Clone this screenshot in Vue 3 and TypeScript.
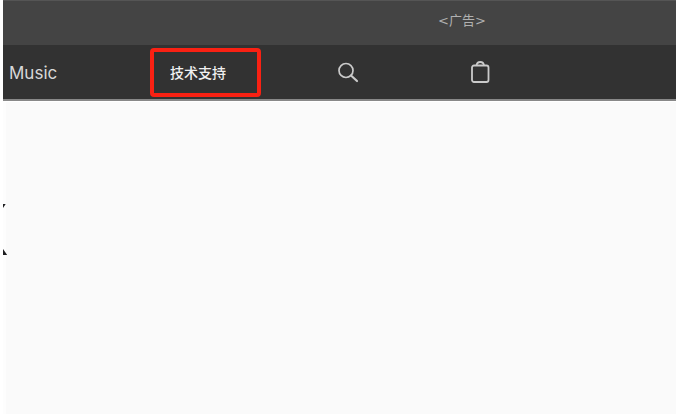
<script setup lang="ts">
const adLabel: string = '<广告>'
const supportLabel: string = '技术支持'
</script>

<template>
  <div class="page">
    <aside class="ad-bar">
      <span class="ad-label">{{ adLabel }}</span>
    </aside>
    <nav class="nav">
      <a class="link music" href="#music">Music</a>
      <a class="link support" href="#support">{{ supportLabel }}</a>
      <button class="icon-button" type="button" aria-label="Search">
        <svg width="24" height="24" viewBox="0 0 24 24" fill="none" stroke="#cacaca" stroke-width="1.7">
          <circle cx="10" cy="10.5" r="7" />
          <path d="M15 15.500L21 21" stroke-width="2.200" stroke-linecap="round" />
        </svg>
      </button>
      <button class="icon-button" type="button" aria-label="Shopping bag">
        <svg width="24" height="24" viewBox="0 0 24 24" fill="none" stroke="#cacaca" stroke-width="1.8">
          <rect x="4" y="5.500" width="16.500" height="16.500" rx="2" />
          <path d="M8.500 5.500C8.800 3 10.200 2 12.250 2S15.700 3 16 5.500" />
        </svg>
      </button>
    </nav>
    <main class="content">
      <h1 class="heading"><span>X</span></h1>
    </main>
  </div>
</template>

<style>
body {
  background: #ffffff;
}
</style>

<style scoped>
.page {
  display: flex;
  flex-direction: column;
  box-sizing: border-box;
  min-height: 100vh;
  padding: 0 0 1px 3px;
  font-family: Inter, "Noto Sans CJK SC", sans-serif;
}

.ad-bar {
  display: grid;
  grid-template-columns: 432fr 54fr 187fr;
  box-sizing: border-box;
  height: 45px;
  padding-top: 11px;
  border-top: 1px solid #555555;
  background: #444444;
}

.ad-label {
  grid-column: 2;
  justify-self: center;
  color: #b0b0b0;
  font-family: "DejaVu Sans", "Noto Sans CJK SC", sans-serif;
  font-size: 13px;
  line-height: 18px;
  white-space: nowrap;
}

.nav {
  display: grid;
  grid-template-columns: 147fr 111fr 174fr 90fr 151fr;
  align-items: center;
  box-sizing: border-box;
  height: 56px;
  border-bottom: 2px solid #888888;
  background: #323232;
}

.link {
  color: #d8d8d8;
  font-size: 17px;
  line-height: 20px;
  text-decoration: none;
  white-space: nowrap;
}

.music {
  padding: 2px 0 0 6px;
}

.support {
  box-sizing: border-box;
  height: 49px;
  padding-left: 16px;
  border: 4px solid #f92113;
  border-radius: 4px;
  color: #f0f0f0;
  font-size: 14px;
  font-weight: 500;
  line-height: 41px;
}

.icon-button {
  display: grid;
  justify-self: center;
  padding: 0;
  border: 0;
  background: transparent;
  cursor: pointer;
}

.content {
  flex: 1;
  border-top: 1px solid #ffffff;
  border-left: 3px solid #fdfdfd;
  background: #fafafa;
}

.heading {
  display: flex;
  justify-content: flex-end;
  width: 6px;
  margin: 88px 0 0 -3px;
  overflow: hidden;
  color: #1d1d1f;
  font-family: Inter, sans-serif;
  font-size: 70px;
  font-weight: 700;
  line-height: 80px;
}
</style>
